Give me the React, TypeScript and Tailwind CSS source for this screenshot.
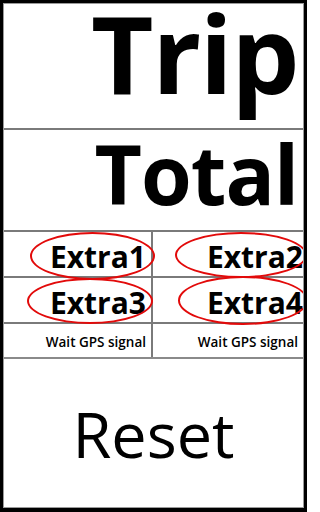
const font = { fontFamily: '"Open Sans", "DejaVu Sans", sans-serif' };

function Ellipse({ className }: { className: string }) {
  return (
    <span
      className={`pointer-events-none absolute rounded-[50%] border-2 border-[#e20a0a] ${className}`}
    />
  );
}

function ExtraCell({
  label,
  ring,
  left,
}: {
  label: string;
  ring: string;
  left?: boolean;
}) {
  return (
    <div
      className={`relative flex h-[44px] items-start justify-end ${
        left ? "w-[149px] border-r-2 border-[#7a7a7a] pr-[5px]" : "flex-1 pr-0"
      }`}
    >
      <Ellipse className={ring} />
      <span className="text-[30px] font-bold leading-[49px] text-black">
        {label}
      </span>
    </div>
  );
}

export default function App() {
  return (
    <div
      className="box-border h-[512px] w-[307px] border-[3px] border-b-4 border-black bg-white"
      style={font}
    >
      <div className="flex h-full flex-col overflow-hidden border border-[#9a9a9a]">
        {/* Trip */}
        <div className="flex h-[126px] shrink-0 justify-end border-b-2 border-[#7a7a7a] pr-[5px]">
          <span className="text-[108px] font-bold leading-[98px] tracking-[-1.5px] text-black">
            Trip
          </span>
        </div>

        {/* Total */}
        <div className="flex h-[102px] shrink-0 justify-end border-b-2 border-[#7a7a7a] pr-[5px]">
          <span className="text-[82px] font-bold leading-[86px] tracking-[-1px] text-black">
            Total
          </span>
        </div>

        {/* Extras */}
        <div className="flex shrink-0 border-b-2 border-[#7a7a7a]">
          <ExtraCell label="Extra1" left ring="left-[26px] top-0 h-[48px] w-[125px]" />
          <ExtraCell label="Extra2" ring="left-[22px] top-0 h-[46px] w-[132px]" />
        </div>
        <div className="flex shrink-0 border-b-2 border-[#7a7a7a]">
          <ExtraCell label="Extra3" left ring="left-[23px] top-0 h-[46px] w-[126px]" />
          <ExtraCell label="Extra4" ring="left-[25px] top-[-2px] h-[49px] w-[130px]" />
        </div>

        {/* GPS status */}
        <div className="flex h-[35px] shrink-0 border-b-2 border-[#8a8a8a]">
          <div className="flex w-[149px] justify-end border-r-2 border-[#7a7a7a] pr-[5px]">
            <span className="text-[13.5px] font-semibold leading-[36px] text-black">
              Wait GPS signal
            </span>
          </div>
          <div className="flex flex-1 justify-end pr-[5px]">
            <span className="text-[13.5px] font-semibold leading-[36px] text-black">
              Wait GPS signal
            </span>
          </div>
        </div>

        {/* Reset */}
        <div className="flex flex-1 justify-center">
          <span className="text-[63px] font-normal leading-[149px] text-black">
            Reset
          </span>
        </div>
      </div>
    </div>
  );
}
